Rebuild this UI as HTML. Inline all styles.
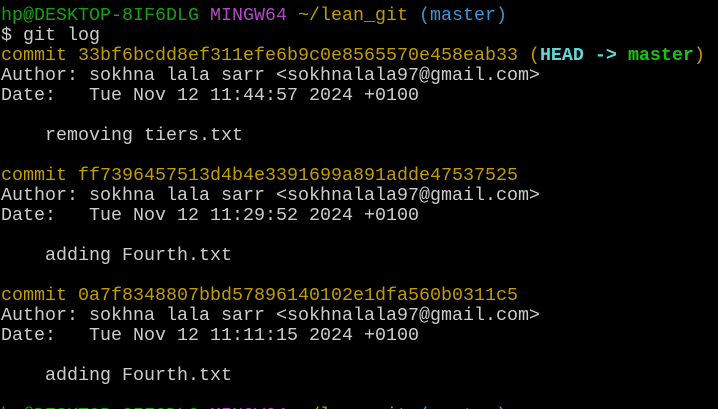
<!DOCTYPE html>
<html><head><meta charset="utf-8"><style>
html,body{margin:0;padding:0;background:#000;width:718px;height:409px;overflow:hidden;position:relative}
pre{margin:0;position:absolute;left:1px;top:6px;font-family:"Liberation Mono","DejaVu Sans Mono",monospace;font-size:18.33px;line-height:20px;color:#cccccc;white-space:pre}
.g{color:#13a10e}.m{color:#b148c6}.y{color:#c19c00}.c{color:#3a96dd}
.hc{color:#61d6d6;font-weight:bold}.hg{color:#16c60c;font-weight:bold}
</style></head><body><pre><span class="g">hp@DESKTOP-8IF6DLG</span> <span class="m">MINGW64</span> <span class="y">~/lean_git</span> <span class="c">(master)</span>
$ git log
<span class="y">commit 33bf6bcdd8ef311efe6b9c0e8565570e458eab33 (</span><span class="hc">HEAD -&gt; </span><span class="hg">master</span><span class="y">)</span>
Author: sokhna lala sarr &lt;sokhnalala97@gmail.com&gt;
Date:   Tue Nov 12 11:44:57 2024 +0100

    removing tiers.txt

<span class="y">commit ff7396457513d4b4e3391699a891adde47537525</span>
Author: sokhna lala sarr &lt;sokhnalala97@gmail.com&gt;
Date:   Tue Nov 12 11:29:52 2024 +0100

    adding Fourth.txt

<span class="y">commit 0a7f8348807bbd57896140102e1dfa560b0311c5</span>
Author: sokhna lala sarr &lt;sokhnalala97@gmail.com&gt;
Date:   Tue Nov 12 11:11:15 2024 +0100

    adding Fourth.txt

<span class="g">hp@DESKTOP-8IF6DLG</span> <span class="m">MINGW64</span> <span class="y">~/lean_git</span> <span class="c">(master)</span></pre></body></html>
